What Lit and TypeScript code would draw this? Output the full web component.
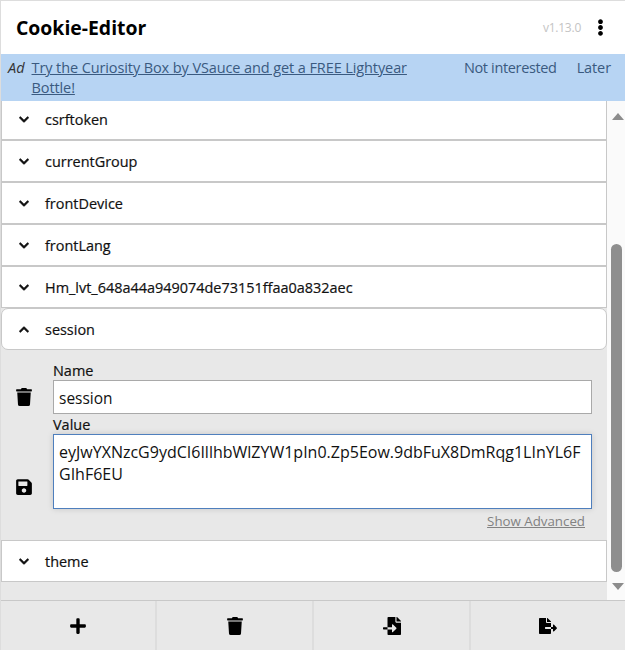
import { LitElement, html, css, svg } from "lit";
import { customElement } from "lit/decorators.js";

const P = {
  down: ["0 0 448 512", "M207.029 381.476L12.686 187.132c-9.373-9.373-9.373-24.569 0-33.941l22.667-22.667c9.357-9.357 24.522-9.375 33.901-.04L224 284.505l154.745-154.021c9.379-9.335 24.544-9.317 33.901.04l22.667 22.667c9.373 9.373 9.373 24.569 0 33.941L240.971 381.476c-9.373 9.372-24.569 9.372-33.942 0z"],
  up: ["0 0 448 512", "M240.971 130.524l194.343 194.343c9.373 9.373 9.373 24.569 0 33.941l-22.667 22.667c-9.357 9.357-24.522 9.375-33.901.04L224 227.495 69.255 381.516c-9.379 9.335-24.544 9.317-33.901-.04l-22.667-22.667c-9.373-9.373-9.373-24.569 0-33.941L207.03 130.525c9.372-9.373 24.568-9.373 33.941-.001z"],
  dots: ["0 0 192 512", "M96 184c39.8 0 72 32.2 72 72s-32.2 72-72 72-72-32.2-72-72 32.2-72 72-72zM24 80c0 39.8 32.2 72 72 72s72-32.2 72-72S135.8 8 96 8 24 40.2 24 80zm0 352c0 39.8 32.2 72 72 72s72-32.2 72-72-32.2-72-72-72-72 32.2-72 72z"],
  trash: ["0 0 448 512", "M432 32H312l-9.4-18.7A24 24 0 0 0 281.1 0H166.8a23.72 23.72 0 0 0-21.4 13.3L136 32H16A16 16 0 0 0 0 48v32a16 16 0 0 0 16 16h416a16 16 0 0 0 16-16V48a16 16 0 0 0-16-16zM53.2 467a48 48 0 0 0 47.9 45h245.8a48 48 0 0 0 47.9-45L416 128H32z"],
  save: ["0 0 448 512", "M433.941 129.941l-83.882-83.882A48 48 0 0 0 316.118 32H48C21.49 32 0 53.49 0 80v352c0 26.51 21.49 48 48 48h352c26.51 0 48-21.49 48-48V163.882a48 48 0 0 0-14.059-33.941zM224 416c-35.346 0-64-28.654-64-64 0-35.346 28.654-64 64-64s64 28.654 64 64c0 35.346-28.654 64-64 64zm96-304.52V212c0 6.627-5.373 12-12 12H76c-6.627 0-12-5.373-12-12V108c0-6.627 5.373-12 12-12h228.52c3.183 0 6.235 1.264 8.485 3.515l3.48 3.48A11.996 11.996 0 0 1 320 111.48z"],
  plus: ["0 0 448 512", "M416 208H272V64c0-17.67-14.33-32-32-32h-32c-17.67 0-32 14.33-32 32v144H32c-17.67 0-32 14.33-32 32v32c0 17.67 14.33 32 32 32h144v144c0 17.67 14.33 32 32 32h32c17.67 0 32-14.33 32-32V304h144c17.67 0 32-14.33 32-32v-32c0-17.67-14.33-32-32-32z"],
  fimport: ["0 0 512 512", "M16 288c-8.8 0-16 7.2-16 16v32c0 8.8 7.2 16 16 16h112v-64H16zm336-152V0H152c-13.3 0-24 10.7-24 24v264h127.99v-65.18c0-14.28 17.29-21.41 27.36-11.27l95.7 96.43c6.6 6.65 6.6 17.39 0 24.04l-95.7 96.42c-10.06 10.14-27.36 3.01-27.36-11.27V352H128v136c0 13.3 10.7 24 24 24h336c13.3 0 24-10.7 24-24V160H376c-13.2 0-24-10.8-24-24zm153-31L407.1 7c-4.5-4.5-10.6-7-17-7H384v128h128v-6.1c0-6.3-2.5-12.4-7-16.9z"],
  fexport: ["0 0 576 512", "M384 121.9c0-6.3-2.5-12.4-7-16.9L279.1 7c-4.5-4.5-10.6-7-17-7H256v128h128zM571 308l-95.7-96.4c-10.1-10.1-27.4-3-27.4 11.3V288h-64v64h64v65.2c0 14.3 17.3 21.4 27.4 11.3L571 332c6.6-6.6 6.6-17.4 0-24zm-379 28v-32c0-8.8 7.2-16 16-16h176V160H248c-13.2 0-24-10.8-24-24V0H24C10.7 0 0 10.7 0 24v464c0 13.3 10.7 24 24 24h336c13.3 0 24-10.7 24-24V352H208c-8.8 0-16-7.2-16-16z"],
} as const;

const icon = (k: keyof typeof P, cls: string) =>
  html`<svg class=${cls} viewBox=${P[k][0]} fill="currentColor" aria-hidden="true">${svg`<path d=${P[k][1]}></path>`}</svg>`;

@customElement("app-root")
export class AppRoot extends LitElement {
  static styles = css`
    :host {
      display: flex;
      flex-direction: column;
      width: 625px;
      height: 650px;
      box-sizing: border-box;
      border-top: 1px solid #ddd;
      border-left: 1px solid #ddd;
      font-family: "Open Sans", "Noto Sans", sans-serif;
      font-size: 14px;
      color: #000;
      background: #fff;
      overflow: hidden;
    }
    * { box-sizing: border-box; }
    header {
      height: 53px;
      flex: none;
      display: flex;
      align-items: center;
      padding: 0 21px 0 15px;
    }
    h1 {
      flex: 1;
      margin: 0;
      font-size: 19.4px;
      font-weight: 700;
    }
    .version { font-size: 12px; letter-spacing: -0.25px; color: #c4c4c4; margin-right: 16px; }
    .dots { width: 7px; height: 17px; display: block; }
    .ad {
      height: 47px;
      flex: none;
      background: #b7d4f3;
      color: #3a5a80;
      display: flex;
      font-size: 14.5px;
      line-height: 20px;
      padding: 4px 14px 0 7px;
    }
    .ad em { color: #333; margin-right: 7px; flex: none; }
    .ad a { color: inherit; text-decoration: underline; width: 400px; flex: none; letter-spacing: -0.1px; }
    .ad .act { margin-left: auto; letter-spacing: -0.35px; }
    .ad .later { margin-left: 20px; letter-spacing: -0.1px; }
    .main { flex: 1; min-height: 0; display: flex; }
    .list {
      width: 606px;
      flex: none;
      overflow: hidden;
      background: #e8e8e8;
    }
    .scroller { margin-top: -3px; }
    .row {
      height: 42px;
      background: #fff;
      border: 1px solid #c8c8c8;
      display: flex;
      align-items: center;
      padding-left: 17px;
      gap: 16px;
      font-size: 14.45px;
      color: #111;
      -webkit-text-stroke: 0.2px #111;
    }
    .row.open { border-radius: 7px; }
    .chev { width: 10px; height: 11px; display: block; flex: none; stroke: currentColor; stroke-width: 25; }
    .panel {
      height: 190px;
      display: flex;
      background: #e8e8e8;
    }
    .side {
      width: 52px;
      flex: none;
      display: flex;
      flex-direction: column;
      align-items: center;
      padding: 38px 6px 0 0;
      gap: 72px;
    }
    .side svg { width: 16px; height: 18px; display: block; }
    .fields { flex: 1; padding: 10px 15px 0 0; display: flex; flex-direction: column; }
    label {
      font-size: 14.45px;
      line-height: 21px;
      height: 20px;
      color: #111;
      -webkit-text-stroke: 0.2px #111;
    }
    input, textarea {
      display: block;
      width: 100%;
      font: inherit;
      color: #111;
      background: #fff;
      border: 1px solid #a9a9a9;
      padding: 0 5px;
      outline: none;
      border-radius: 0;
      margin: 0;
    }
    input { height: 34px; font-size: 15.5px; padding-top: 1px; }
    textarea {
      height: 75px;
      font-size: 16px;
      resize: none;
      border-color: #4f7fbd;
      box-shadow: 0 0 6px rgba(0,0,0,.15);
      padding: 7px 5px;
      line-height: 21.5px;
      overflow: hidden;
      word-break: break-all;
    }
    .adv {
      align-self: flex-end;
      margin: 4px 7px 0 0;
      font-size: 13.3px;
      color: #828282;
      text-decoration: underline;
      line-height: 16px;
    }
    .track {
      flex: 1;
      background: #fafafa;
      position: relative;
    }
    .arrow { position: absolute; left: 5px; width: 0; height: 0; border-left: 6px solid transparent; border-right: 6px solid transparent; }
    .arrow.u { top: 12px; border-bottom: 7px solid #8c8c8c; }
    .arrow.d { top: 482px; border-top: 7px solid #8c8c8c; }
    .thumb { position: absolute; left: 4px; top: 143px; width: 11px; height: 328px; background: #8e8e8e; border-radius: 6px; }
    footer {
      height: 50px;
      flex: none;
      display: grid;
      grid-template-columns: 156px 157px 157px 1fr;
      background: #e8e8e8;
      border-top: 1px solid #c8c8c8;
    }
    footer div { display: flex; align-items: center; justify-content: center; border-right: 2px solid #ddd; }
    footer div:last-child { border-right: 0; }
    footer svg { height: 18px; width: 18px; display: block; }
  `;

  render() {
    const rows = ["csrftoken", "currentGroup", "frontDevice", "frontLang", "Hm_lvt_648a44a949074de73151ffaa0a832aec"];
    return html`
      <header>
        <h1>Cookie-Editor</h1>
        <span class="version">v1.13.0</span>
        ${icon("dots", "dots")}
      </header>
      <div class="ad">
        <em>Ad</em>
        <a href="#">Try the Curiosity Box by VSauce and get a FREE Lightyear Bottle!</a>
        <span class="act">Not interested</span>
        <span class="act later">Later</span>
      </div>
      <div class="main">
        <div class="list">
          <div class="scroller">
            ${rows.map((r) => html`<div class="row">${icon("down", "chev")}<span>${r}</span></div>`)}
            <div class="row open">${icon("up", "chev")}<span>session</span></div>
            <div class="panel">
              <div class="side">${icon("trash", "")}${icon("save", "")}</div>
              <div class="fields">
                <label>Name</label>
                <input .value=${"session"} />
                <label>Value</label>
                <textarea .value=${"eyJwYXNzcG9ydCI6IllhbWlZYW1pIn0.Zp5Eow.9dbFuX8DmRqg1LInYL6FGIhF6EU"}></textarea>
                <span class="adv">Show Advanced</span>
              </div>
            </div>
            <div class="row">${icon("down", "chev")}<span>theme</span></div>
          </div>
        </div>
        <div class="track">
          <i class="arrow u"></i>
          <i class="thumb"></i>
          <i class="arrow d"></i>
        </div>
      </div>
      <footer>
        <div>${icon("plus", "")}</div>
        <div>${icon("trash", "")}</div>
        <div>${icon("fimport", "")}</div>
        <div>${icon("fexport", "")}</div>
      </footer>
    `;
  }
}
